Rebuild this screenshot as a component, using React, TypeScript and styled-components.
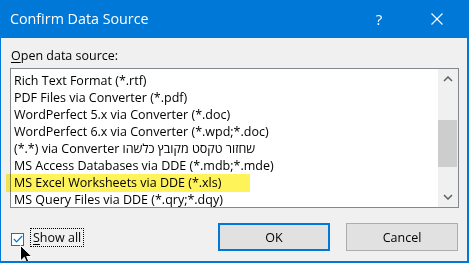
import React from "react";
import styled, { createGlobalStyle } from "styled-components";

const GlobalStyle = createGlobalStyle`
  html, body {
    margin: 0;
    padding: 0;
    background: #ffffff;
  }
  body {
    font-family: "Open Sans", "Liberation Sans", "DejaVu Sans", sans-serif;
    font-size: 12.5px;
    color: #000000;
  }
`;

const Window = styled.div`
  position: relative;
  box-sizing: border-box;
  width: 469px;
  height: 263px;
  background: #f0f0f0;
  border-style: solid;
  border-color: #0078d7;
  border-width: 0 2px 2px 1px;
  display: flex;
  flex-direction: column;
  overflow: hidden;
`;

const TitleBar = styled.div`
  height: 38px;
  flex: none;
  background: #0078d7;
  color: #ffffff;
  display: flex;
  align-items: center;
  padding-left: 9px;
`;

const Title = styled.div`
  flex: 1;
  font-size: 14.3px;
  line-height: 20px;
  margin-top: -1px;
`;

const TitleButton = styled.div<{ $w: number }>`
  width: ${({ $w }) => $w}px;
  height: 38px;
  display: flex;
  align-items: center;
  justify-content: center;
  font-size: 15px;
`;

const Body = styled.div`
  flex: 1;
  display: flex;
  flex-direction: column;
  padding: 10px 9px 0 9px;
`;

const Label = styled.div`
  line-height: 16px;
  padding-left: 1px;
  margin-bottom: 4px;
`;

const Key = styled.span`
  text-decoration: underline;
  text-underline-offset: 2px;
`;

const ListBox = styled.div`
  box-sizing: border-box;
  width: 449px;
  height: 140px;
  border: 1px solid #828790;
  background: #ffffff;
  display: flex;
  overflow: hidden;
`;

const Items = styled.div`
  flex: 1;
  padding-top: 3px;
  overflow: hidden;
`;

const Item = styled.div<{ $rtl?: boolean }>`
  height: 17px;
  line-height: 18px;
  padding-left: 3px;
  white-space: nowrap;
  text-align: left;
  direction: ${({ $rtl }) => ($rtl ? "rtl" : "ltr")};
`;

const ScrollBar = styled.div`
  width: 20px;
  flex: none;
  background: #f0f0f0;
  display: flex;
  flex-direction: column;
  align-items: center;
`;

const Arrow = styled.div`
  height: 20px;
  width: 20px;
  display: flex;
  align-items: center;
  justify-content: center;
`;

const Track = styled.div`
  flex: 1;
  width: 100%;
  padding-top: 31px;
`;

const Thumb = styled.div`
  height: 47px;
  width: 19px;
  background: #cdcdcd;
`;

const Footer = styled.div`
  display: flex;
  align-items: center;
  justify-content: space-between;
  margin-top: 15px;
`;

const CheckRow = styled.div`
  display: flex;
  align-items: center;
  padding-left: 1px;
`;

const CheckBox = styled.div`
  box-sizing: border-box;
  width: 13px;
  height: 13px;
  border: 1px solid #0078d7;
  background: #ffffff;
  display: flex;
  align-items: center;
  justify-content: center;
  margin-top: 4px;
`;

const FocusLabel = styled.div`
  margin-left: 6px;
  border: 1px dotted #000000;
  padding: 0 2px;
  line-height: 17px;
`;

const Buttons = styled.div`
  display: flex;
  gap: 16px;
`;

const Button = styled.div<{ $default?: boolean }>`
  box-sizing: border-box;
  width: 112px;
  height: 28px;
  background: #e1e1e1;
  border: ${({ $default }) =>
    $default ? "2px solid #0078d7" : "1px solid #adadad"};
  display: flex;
  align-items: center;
  justify-content: center;
`;

const Highlight = styled.div`
  position: absolute;
  left: 5px;
  top: 174px;
  width: 244px;
  height: 18px;
  background: #fff35a;
  mix-blend-mode: multiply;
  pointer-events: none;
`;

const Cursor = styled.svg`
  position: absolute;
  left: 19px;
  top: 245px;
`;

const items = [
  "Rich Text Format (*.rtf)",
  "PDF Files via Converter (*.pdf)",
  "WordPerfect 5.x via Converter (*.doc)",
  "WordPerfect 6.x via Converter (*.wpd;*.doc)",
  "שחזור טקסט מקובץ כלשהו via Converter (*.*)",
  "MS Access Databases via DDE (*.mdb;*.mde)",
  "MS Excel Worksheets via DDE (*.xls)",
  "MS Query Files via DDE (*.qry;*.dqy)",
];

const Chevron: React.FC<{ down?: boolean }> = ({ down }) => (
  <svg width="10" height="6" viewBox="0 0 10 6">
    <path
      d={down ? "M1 1 L5 5 L9 1" : "M1 5 L5 1 L9 5"}
      fill="none"
      stroke="#606060"
      strokeWidth="1.5"
    />
  </svg>
);

export default function App() {
  return (
    <>
      <GlobalStyle />
      <Window>
        <TitleBar>
          <Title>Confirm Data Source</Title>
          <TitleButton $w={56}>?</TitleButton>
          <TitleButton $w={60}>
            <svg width="12" height="12" viewBox="0 0 12 12">
              <path d="M0.5 0.5 L11.5 11.5 M11.5 0.5 L0.5 11.5" stroke="#ffffff" strokeWidth="1.1" />
            </svg>
          </TitleButton>
        </TitleBar>
        <Body>
          <Label>
            <Key>O</Key>pen data source:
          </Label>
          <ListBox>
            <Items>
              {items.map((text) => (
                <Item key={text} $rtl={/[\u0590-\u05ff]/.test(text)}>
                  {text}
                </Item>
              ))}
            </Items>
            <ScrollBar>
              <Arrow>
                <Chevron />
              </Arrow>
              <Track>
                <Thumb />
              </Track>
              <Arrow>
                <Chevron down />
              </Arrow>
            </ScrollBar>
          </ListBox>
          <Footer>
            <CheckRow>
              <CheckBox>
                <svg width="10" height="8" viewBox="0 0 10 8">
                  <path d="M0.8 4 L3.6 6.8 L9.2 1" fill="none" stroke="#0078d7" strokeWidth="1.2" />
                </svg>
              </CheckBox>
              <FocusLabel>
                <Key>S</Key>how all
              </FocusLabel>
            </CheckRow>
            <Buttons>
              <Button $default>OK</Button>
              <Button>Cancel</Button>
            </Buttons>
          </Footer>
        </Body>
        <Highlight />
        <Cursor width="13" height="20" viewBox="0 0 13 20">
          <path
            d="M0.5 0.5 L0.5 16 L4.3 12.3 L7 18.5 L9.3 17.5 L6.7 11.5 L11.8 11.5 Z"
            fill="#000000"
            stroke="#ffffff"
            strokeWidth="1"
          />
        </Cursor>
      </Window>
    </>
  );
}
